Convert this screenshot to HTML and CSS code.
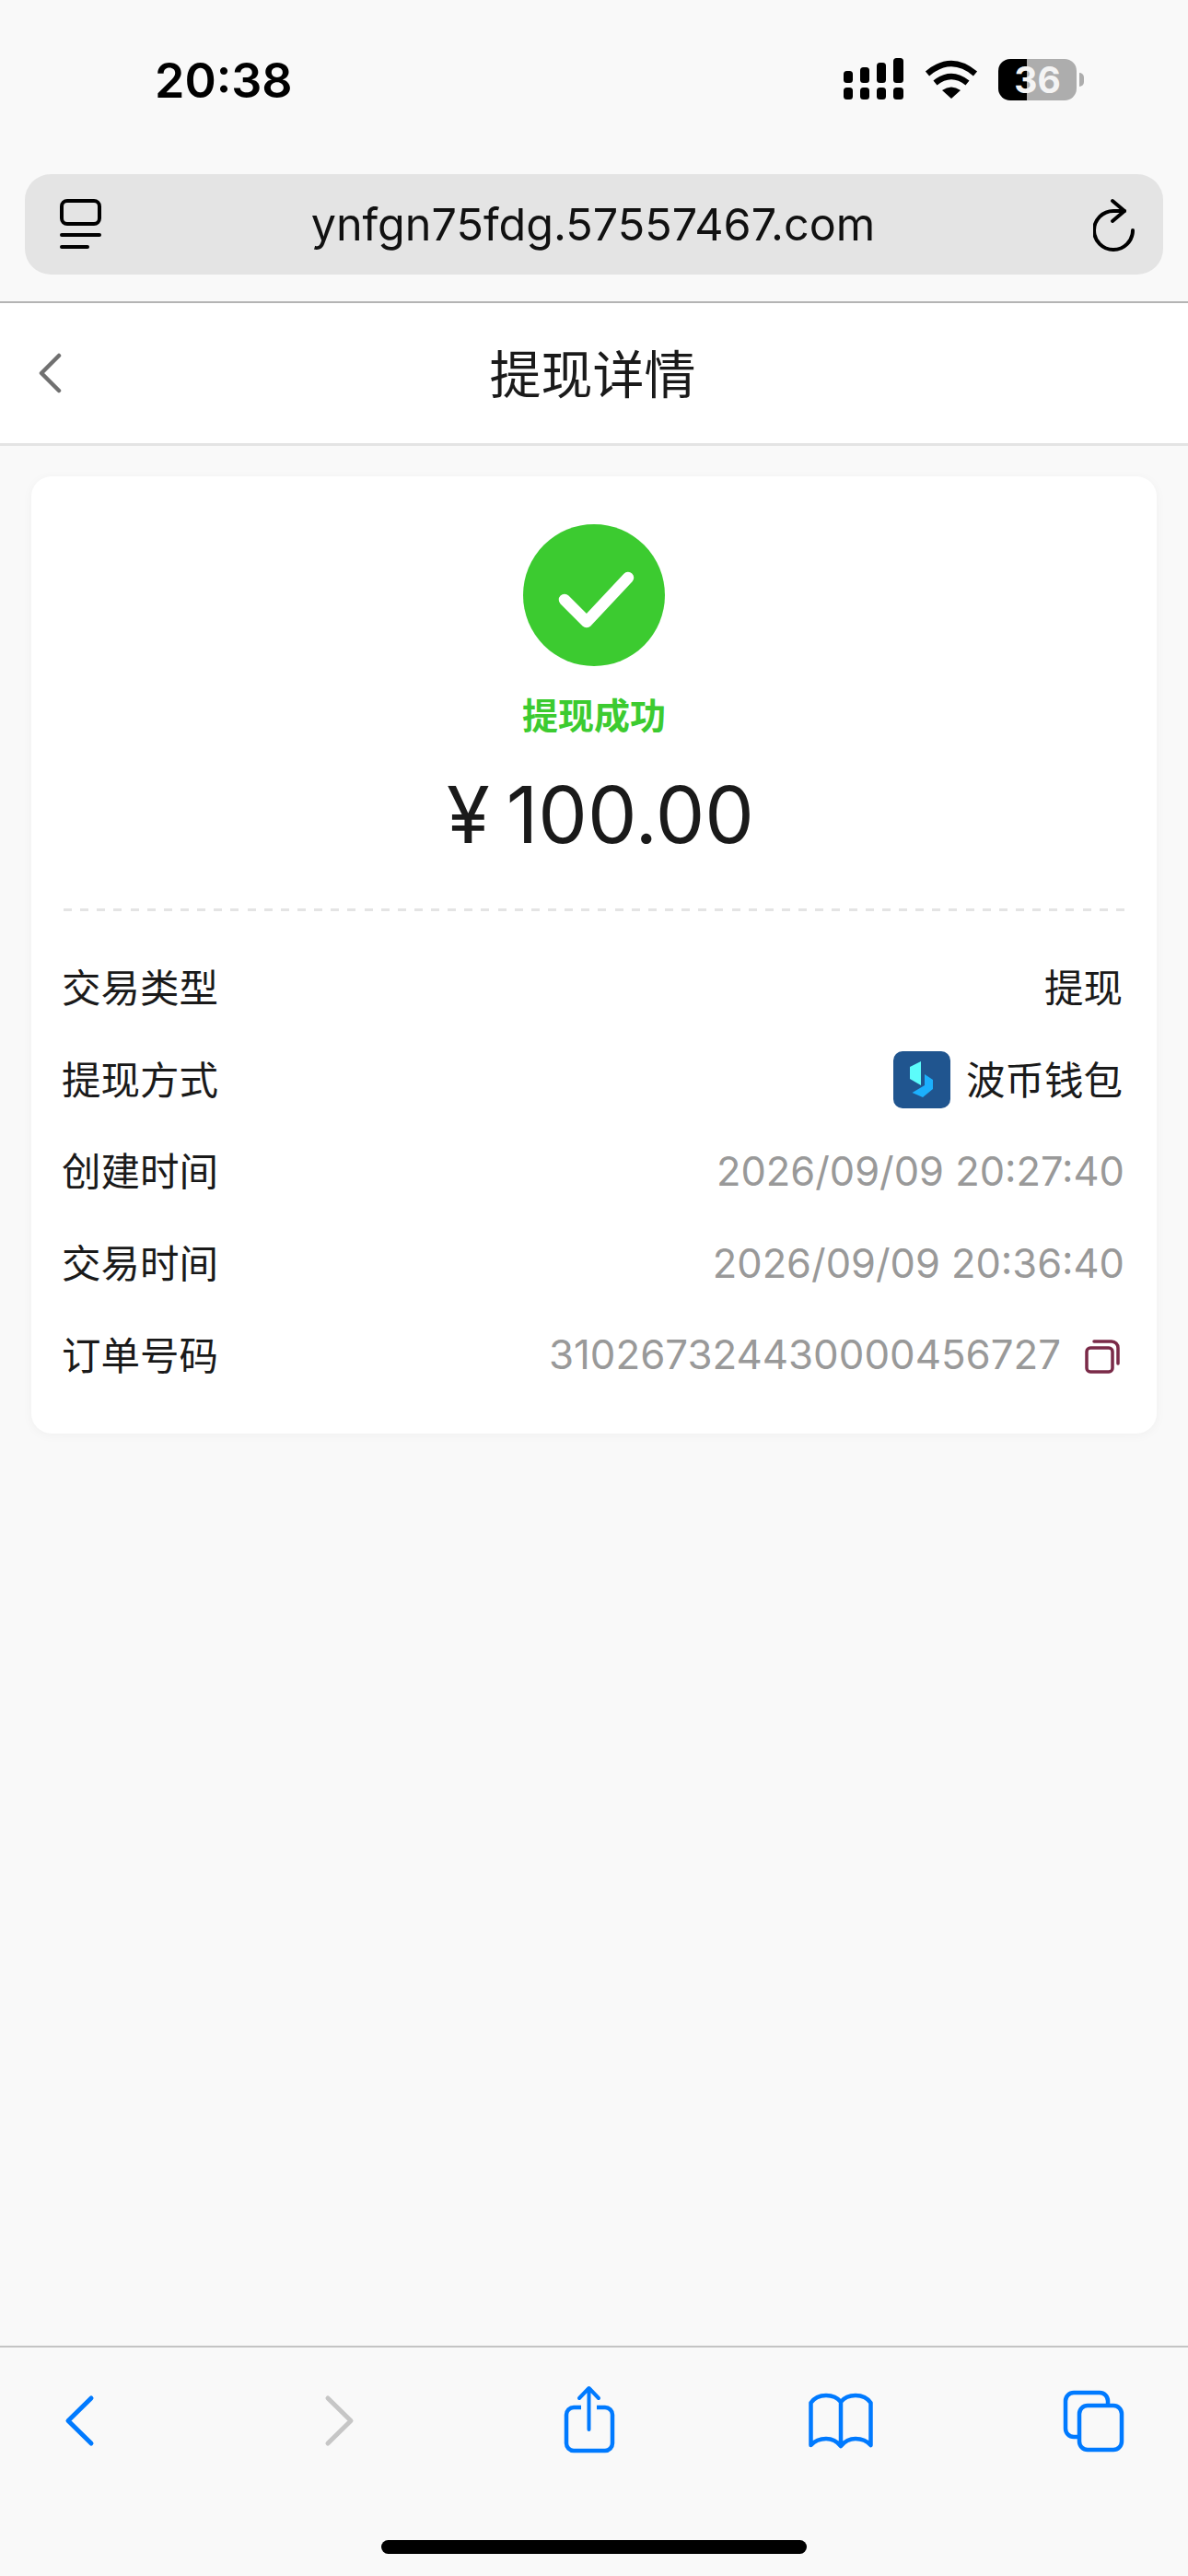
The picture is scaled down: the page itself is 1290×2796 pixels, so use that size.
FILE: index.html
```html
<!DOCTYPE html>
<html lang="zh-CN">
<head>
  <meta charset="UTF-8">
  <title>提现详情</title>
  <link rel="stylesheet" href="styles.css">
</head>
<body>

  <div class="browser-top">
    <div class="status-bar">
      <span class="clock">20:38</span>
      <div class="status-icons">
        <svg class="signal" width="66" height="46" viewBox="0 0 66 46">
          <rect x="0" y="14" width="10" height="13" rx="3.5"/>
          <rect x="18" y="10" width="10" height="17" rx="3.5"/>
          <rect x="36" y="5" width="10" height="22" rx="3.5"/>
          <rect x="54" y="0" width="11" height="27" rx="3.5"/>
          <rect x="0" y="32" width="10" height="13" rx="3.5"/>
          <rect x="18" y="32" width="10" height="13" rx="3.5"/>
          <rect x="36" y="32" width="10" height="13" rx="3.5"/>
          <rect x="54" y="32" width="11" height="13" rx="3.5"/>
        </svg>
        <svg class="wifi" width="58" height="43" viewBox="0 0 58 43">
          <path d="M3 15 Q29 -7 55 15" fill="none" stroke="#000" stroke-width="6.5"/>
          <path d="M11.5 25 Q29 11 46.5 25" fill="none" stroke="#000" stroke-width="6.5"/>
          <path d="M19 33 Q29 26 39 33 L29 42 Z"/>
        </svg>
        <div class="battery"><span>36</span></div>
      </div>
    </div>

    <div class="address-bar">
      <svg class="tabs-icon" width="45" height="56" viewBox="0 0 45 56">
        <rect x="2" y="2" width="41" height="25" rx="6" fill="none" stroke="#000" stroke-width="4"/>
        <path d="M2 39 H43 M2 52 H30" fill="none" stroke="#000" stroke-width="4" stroke-linecap="round"/>
      </svg>
      <span class="url">ynfgn75fdg.57557467.com</span>
      <svg class="reload-icon" width="46" height="60" viewBox="0 0 46 60">
        <path d="M34 15 H22 A21 21 0 1 0 43 36" fill="none" stroke="#000" stroke-width="4" stroke-linecap="round"/>
        <path d="M21 4 L34 15 L21 26" fill="none" stroke="#000" stroke-width="4" stroke-linecap="round" stroke-linejoin="round"/>
      </svg>
    </div>
  </div>

  <header class="page-header">
    <svg class="header-back" width="26" height="44" viewBox="0 0 26 44">
      <path d="M23 3 L4 22 L23 41" fill="none" stroke="#707070" stroke-width="4.5" stroke-linecap="round" stroke-linejoin="round"/>
    </svg>
    <h1>提现详情</h1>
  </header>

  <main class="content">
    <section class="card">
      <div class="result">
        <div class="result-icon">
          <svg width="154" height="154" viewBox="0 0 154 154">
            <path d="M45 82 L69 106 L114 58" fill="none" stroke="#fff" stroke-width="12.5" stroke-linecap="round" stroke-linejoin="round"/>
          </svg>
        </div>
        <div class="result-text">提现成功</div>
        <div class="amount"><span class="currency">¥</span>100.00</div>
      </div>
      <div class="dashes"></div>

      <div class="rows">
        <div class="row">
          <span class="label">交易类型</span>
          <span class="label">提现</span>
        </div>
        <div class="row">
          <span class="label">提现方式</span>
          <span class="method">
            <svg width="62" height="62" viewBox="0 0 62 62">
              <rect width="62" height="62" rx="10" fill="#20558f"/>
              <path d="M18 17 L30 11 V37 L18 30 Z" fill="#5cfcfb"/>
              <path d="M34 25 L43 31 V41 L32 50 L20.5 45 L34 37 Z" fill="#1cb0fd"/>
            </svg>
            <span class="label">波币钱包</span>
          </span>
        </div>
        <div class="row">
          <span class="label">创建时间</span>
          <span class="muted">2026/09/09 20:27:40</span>
        </div>
        <div class="row">
          <span class="label">交易时间</span>
          <span class="muted">2026/09/09 20:36:40</span>
        </div>
        <div class="row">
          <span class="label">订单号码</span>
          <span class="order">
            <span class="muted">310267324430000456727</span>
            <svg width="38" height="38" viewBox="0 0 38 38">
              <rect x="2" y="10" width="28" height="26" rx="4" fill="none" stroke="#7a2a48" stroke-width="3.5"/>
              <path d="M10 3 H29 A7 7 0 0 1 36 10 V27" fill="none" stroke="#7a2a48" stroke-width="3.5" stroke-linecap="round"/>
            </svg>
          </span>
        </div>
      </div>
    </section>
  </main>

  <footer class="toolbar">
    <div class="toolbar-icons">
      <svg width="80" height="80" viewBox="0 0 80 80">
        <path d="M53 15 L28 39.5 L53 64" fill="none" stroke="#007aff" stroke-width="5" stroke-linecap="round" stroke-linejoin="round"/>
      </svg>
      <svg width="80" height="80" viewBox="0 0 80 80">
        <path d="M35 15 L60 39.5 L35 64" fill="none" stroke="#c6c6c6" stroke-width="5" stroke-linecap="round" stroke-linejoin="round"/>
      </svg>
      <svg width="80" height="80" viewBox="0 0 80 80">
        <path d="M34 25 H26 A8 8 0 0 0 18 33 V64 A8 8 0 0 0 26 72 H60 A8 8 0 0 0 68 64 V33 A8 8 0 0 0 60 25 H51" fill="none" stroke="#007aff" stroke-width="4.5"/>
        <path d="M42.5 49 V5 M32 15 L42.5 4 L53 15" fill="none" stroke="#007aff" stroke-width="4" stroke-linecap="round" stroke-linejoin="round"/>
      </svg>
      <svg width="80" height="80" viewBox="0 0 80 80">
        <path d="M41 19 C37 14 31 12 25 12 C18 12 12 15 8.5 20 V66 C13 61 19 59 25 59 C31 59 37 62 41 67 C45 62 51 59 57 59 C63 59 69 61 73.5 66 V20 C70 15 64 12 57 12 C51 12 45 14 41 19 Z M41 19 V67" fill="none" stroke="#007aff" stroke-width="4.5" stroke-linejoin="round"/>
      </svg>
      <svg width="80" height="80" viewBox="0 0 80 80">
        <path d="M23 57 H19 A9 9 0 0 1 10 48 V18 A9 9 0 0 1 19 9 H47 A9 9 0 0 1 56 18 V23" fill="none" stroke="#007aff" stroke-width="4.5"/>
        <rect x="25" y="23" width="46" height="48" rx="9" fill="none" stroke="#007aff" stroke-width="4.5"/>
      </svg>
    </div>
    <div class="home-indicator"></div>
  </footer>

</body>
</html>
```

FILE: styles.css
```css
* {
  box-sizing: border-box;
}

body {
  font-family: Inter, "Noto Sans CJK SC", sans-serif;
  background-color: #f9f9f9;
  color: #1a1a1a;
  margin: 0;
  width: 1290px;
  height: 2796px;
  display: flex;
  flex-direction: column;
}

.browser-top {
  height: 327px;
  padding: 60px 27px 0;
}

.status-bar {
  display: flex;
  justify-content: space-between;
  align-items: center;
  height: 52px;
  padding: 0 94px 0 141px;
  color: #000;
}

.clock {
  font-size: 52px;
  font-weight: 600;
  line-height: 52px;
  padding-top: 3px;
}

.status-icons {
  display: flex;
  align-items: center;
}

.wifi {
  margin-left: 22px;
}

.battery {
  position: relative;
  width: 85px;
  height: 45px;
  margin-left: 22px;
  border-radius: 13px;
  background: linear-gradient(to right, #000 31px, #adadad 31px);
  color: #f4f4f4;
  font-size: 39px;
  font-weight: 700;
  line-height: 45px;
  text-align: center;
}

.battery::after {
  content: "";
  position: absolute;
  left: 88px;
  top: 15px;
  width: 5px;
  height: 15px;
  border-radius: 0 8px 8px 0;
  background-color: #adadad;
}

.address-bar {
  display: flex;
  justify-content: space-between;
  align-items: center;
  height: 109px;
  margin-top: 77px;
  padding: 0 30px 0 38px;
  background-color: #e4e4e4;
  border-radius: 28px;
  color: #111;
}

.url {
  font-size: 48.5px;
  margin-right: 9px;
}

.page-header {
  display: grid;
  grid-template-columns: 1fr auto 1fr;
  align-items: center;
  height: 157px;
  padding: 0 44px 0 41px;
  background-color: #fff;
  border-top: 2px solid #b4b4b4;
  border-bottom: 3px solid #e4e4e4;
}

.page-header h1 {
  margin: 0 0 6px;
  font-size: 56px;
  font-weight: 400;
}

.content {
  flex: 1;
  padding: 33px 34px 0;
}

.card {
  background-color: #fff;
  border-radius: 22px;
  box-shadow: 0 2px 12px rgba(0, 0, 0, 0.04);
  padding: 52px 35px 36px;
}

.result {
  display: flex;
  flex-direction: column;
  align-items: center;
  padding-bottom: 54px;
}

.result-icon {
  width: 154px;
  height: 154px;
  border-radius: 50%;
  background-color: #3ccb30;
}

.result-icon svg {
  display: block;
  filter: blur(0.6px);
}

.result-text {
  margin-top: 26px;
  color: #3ccb30;
  font-size: 39px;
  font-weight: 700;
  line-height: 56px;
}

.amount {
  margin: 30px 0 -3px 14px;
  font-size: 85px;
  line-height: 100px;
}

.currency {
  margin-right: 18px;
}

.dashes {
  height: 3px;
  background-image: repeating-linear-gradient(to right, #e4e4e4 0 9px, transparent 9px 18.14px);
}

.rows {
  padding-top: 33px;
}

.row {
  display: flex;
  justify-content: space-between;
  align-items: center;
  height: 99.6px;
}

.label {
  font-size: 42.5px;
  margin: 0 2px 0 -2px;
  padding-bottom: 4px;
}

.method,
.order {
  display: flex;
  align-items: center;
}

.method svg {
  margin: 2px 19px 0 0;
}

.order svg {
  margin: 4px 5px 0 26px;
}

.muted {
  color: #999;
  font-size: 43.4px;
}

.order .muted {
  font-size: 43.8px;
}

.toolbar {
  height: 250px;
  border-top: 2px solid #c4c4c4;
  padding-top: 40px;
}

.toolbar-icons {
  display: flex;
  justify-content: space-between;
  padding: 0 63px 0 46px;
}

.home-indicator {
  width: 462px;
  height: 15px;
  margin: 89px auto 0;
  background-color: #000;
  border-radius: 8px;
}
```
